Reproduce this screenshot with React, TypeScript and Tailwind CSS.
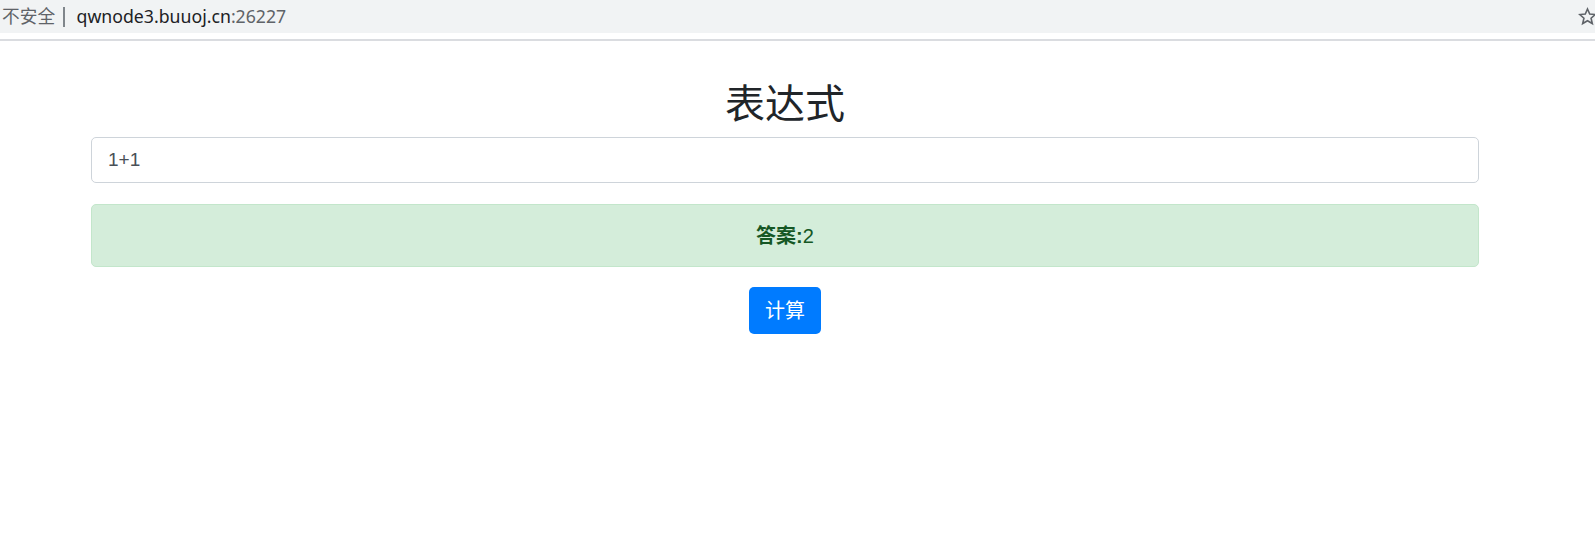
export default function App() {
  const ui = { fontFamily: '"Noto Sans", "Noto Sans CJK SC", sans-serif' };
  const page = { fontFamily: '"Liberation Sans", "Noto Sans CJK SC", sans-serif' };

  return (
    <div className="relative h-[538px] w-[1595px] overflow-hidden bg-white">
      {/* address bar */}
      <div className="flex h-[33px] items-center bg-[#f1f3f4] text-[17.7px]" style={ui}>
        <span className="ml-[2px] text-[#5f6368]">不安全</span>
        <span className="ml-[8px] h-[20px] w-[1.5px] bg-[#80868b]" />
        <span className="ml-[12px] text-[#202124]">
          qwnode3.buuoj.cn<span className="text-[#5f6368]">:26227</span>
        </span>
        <svg
          className="ml-auto mr-[-2px]"
          width="19"
          height="19"
          viewBox="0 0 24 24"
          fill="none"
          stroke="#5f6368"
          strokeWidth="2"
          strokeLinejoin="miter"
        >
          <path d="M12 2.5l2.8 6.4 6.9.6-5.2 4.6 1.6 6.8L12 17.3l-6.1 3.6 1.6-6.8-5.2-4.6 6.9-.6z" />
        </svg>
      </div>
      <div className="h-[6px] bg-white" />
      <div className="h-[2px] bg-[#dadce0]" />

      {/* page */}
      <div className="ml-[91px] w-[1388px] pt-[39px]" style={page}>
        <h2 className="mb-[9px] text-center text-[40px] leading-[48px] font-normal text-[#212529]">表达式</h2>
        <div className="flex h-[46px] items-center rounded-[5px] border border-[#ced4da] bg-white px-[16px] text-[19px] text-[#495057]">
          1+1
        </div>
        <div className="mt-[21px] flex h-[63px] items-center justify-center rounded-[5px] border border-[#c3e6cb] bg-[#d4edda] text-[20px] text-[#155724]">
          <b className="font-bold">答案:</b>2
        </div>
        <button className="mx-auto mt-[20px] block h-[47px] w-[72px] rounded-[5px] bg-[#007bff] text-[20px] text-white">
          计算
        </button>
      </div>
    </div>
  );
}
